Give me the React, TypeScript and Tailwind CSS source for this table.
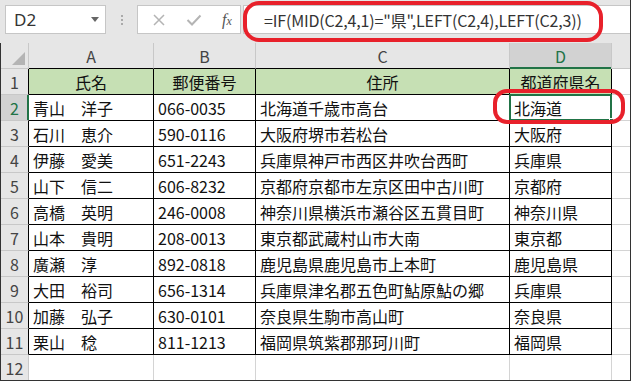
import React from 'react'

const rows: string[][] = [
  ['青山　洋子', '066-0035', '北海道千歳市高台', '北海道'],
  ['石川　恵介', '590-0116', '大阪府堺市若松台', '大阪府'],
  ['伊藤　愛美', '651-2243', '兵庫県神戸市西区井吹台西町', '兵庫県'],
  ['山下　信二', '606-8232', '京都府京都市左京区田中古川町', '京都府'],
  ['高橋　英明', '246-0008', '神奈川県横浜市瀬谷区五貫目町', '神奈川県'],
  ['山本　貴明', '208-0013', '東京都武蔵村山市大南', '東京都'],
  ['廣瀬　淳', '892-0818', '鹿児島県鹿児島市上本町', '鹿児島県'],
  ['大田　裕司', '656-1314', '兵庫県津名郡五色町鮎原鮎の郷', '兵庫県'],
  ['加藤　弘子', '630-0101', '奈良県生駒市高山町', '奈良県'],
  ['栗山　稔', '811-1213', '福岡県筑紫郡那珂川町', '福岡県'],
]

const cellFont = "font-['Noto_Sans_CJK_JP',sans-serif]"

function RowHead({ n, active }: { n: number; active?: boolean }) {
  return (
    <div
      className={`relative flex h-[26px] items-center justify-center border-b border-[#c8c8c8] text-[16px] ${cellFont} ${
        active ? 'bg-[#d2d2d2] text-[#217346]' : 'bg-[#e6e6e6] text-[#444]'
      } ${n <= 11 ? 'border-r border-r-black' : 'border-r border-r-[#c8c8c8]'}`}
    >
      {n}
      {active && <div className="absolute right-[-1px] top-0 h-full w-[2px] bg-[#217346]" />}
    </div>
  )
}

function Cell({ text, center, head }: { text: string; center?: boolean; head?: boolean }) {
  return (
    <div
      className={`flex h-[26px] items-center overflow-visible whitespace-nowrap border-b border-r border-black text-[16px] text-[#111] ${cellFont} ${
        center ? 'justify-center' : 'pl-[4px]'
      } ${head ? 'bg-[#c6e0b4]' : 'bg-white'}`}
    >
      {text}
    </div>
  )
}

function GrayCell() {
  return <div className="h-[26px] border-b border-r border-[#d4d4d4] bg-white" />
}

export default function App() {
  return (
    <div className="relative h-[381px] w-[631px] overflow-hidden border-r border-b border-[#333] bg-[#e6e6e6]">
      {/* formula bar */}
      <div className="flex h-[43px] items-start gap-0 pt-[5px] pl-[5px]">
        <div className="relative flex h-[29px] w-[101px] items-center border border-[#c6c6c6] bg-white pl-[8px] font-['Noto_Sans',sans-serif] text-[17px] text-[#333]">
          D2
          <div className="absolute right-[6px] top-[11px] h-0 w-0 border-x-[4px] border-t-[5px] border-x-transparent border-t-[#666]" />
        </div>
        <div className="flex h-[29px] w-[31px] flex-col items-center justify-center gap-[2px]">
          <div className="h-[2px] w-[2px] bg-[#aaa]" />
          <div className="h-[2px] w-[2px] bg-[#aaa]" />
          <div className="h-[2px] w-[2px] bg-[#aaa]" />
        </div>
        <div className="flex h-[29px] w-[104px] items-center border border-[#c6c6c6] bg-white">
          <svg width="14" height="14" viewBox="0 0 14 14" className="ml-[14px]">
            <path d="M2 2 L12 12 M12 2 L2 12" stroke="#b4b4b4" strokeWidth="1.5" fill="none" />
          </svg>
          <svg width="16" height="14" viewBox="0 0 16 14" className="ml-[20px]">
            <path d="M1.5 7 L6 11.5 L14.5 2.5" stroke="#b4b4b4" strokeWidth="2" fill="none" />
          </svg>
          <span className="ml-[20px] font-['Liberation_Serif',serif] text-[16px] italic text-[#555]">
            f<span className="text-[12px]">x</span>
          </span>
        </div>
        <div className="ml-[2px] flex h-[29px] flex-1 items-center border border-r-0 border-[#c6c6c6] bg-white pl-[20px] font-['Noto_Sans_CJK_JP',sans-serif] text-[16px] tracking-[-0.17px] text-[#333]">
          =IF(MID(C2,4,1)="県",LEFT(C2,4),LEFT(C2,3))
        </div>
      </div>

      {/* grid */}
      <div className="grid grid-cols-[28px_125px_102px_254px_102px_20px] border-l border-[#333]">
        {/* column headers */}
        <div className="relative h-[26px] border-b border-r border-[#c8c8c8] bg-[#e6e6e6]">
          <div className="absolute bottom-[3px] right-[3px] h-0 w-0 border-b-[13px] border-l-[13px] border-b-[#b4b4b4] border-l-transparent" />
        </div>
        {['A', 'B', 'C'].map((c) => (
          <div
            key={c}
            className={`flex h-[26px] items-center justify-center border-b border-r border-b-black border-r-[#c8c8c8] bg-[#e6e6e6] text-[16px] text-[#444] ${cellFont}`}
          >
            {c}
          </div>
        ))}
        <div className={`relative flex h-[26px] items-center justify-center border-r border-[#c8c8c8] bg-[#d2d2d2] text-[16px] text-[#217346] ${cellFont}`}>
          D
          <div className="absolute bottom-0 left-0 h-[2px] w-full bg-[#217346]" />
        </div>
        <div className="h-[26px] border-b border-[#c8c8c8] bg-[#e6e6e6]" />

        {/* row 1 */}
        <RowHead n={1} />
        <Cell text="氏名" center head />
        <Cell text="郵便番号" center head />
        <Cell text="住所" center head />
        <Cell text="都道府県名" center head />
        <GrayCell />

        {rows.map((r, i) => (
          <React.Fragment key={i}>
            <RowHead n={i + 2} active={i === 0} />
            <Cell text={r[0]} />
            <Cell text={r[1]} />
            <Cell text={r[2]} />
            {i === 0 ? (
              <div className={`relative flex h-[26px] items-center border-b border-r border-black bg-white pl-[4px] text-[16px] text-[#111] ${cellFont}`}>
                {r[3]}
                <div className="absolute left-[-1px] top-[-1px] h-[27px] w-[103px] border-2 border-[#217346]" />
                <div className="absolute bottom-[-3px] right-[-3px] h-[5px] w-[5px] border border-white bg-[#217346]" />
              </div>
            ) : (
              <Cell text={r[3]} />
            )}
            <GrayCell />
          </React.Fragment>
        ))}

        {/* row 12 */}
        <RowHead n={12} />
        <GrayCell />
        <GrayCell />
        <GrayCell />
        <GrayCell />
        <GrayCell />
      </div>

      {/* red annotation marks */}
      <div className="pointer-events-none absolute left-[243px] top-[1px] h-[41px] w-[360px] rounded-[16px] border-[4px] border-[#e8212b]" />
      <div className="pointer-events-none absolute left-[493px] top-[89px] h-[35px] w-[132px] rounded-[14px] border-[4px] border-[#e8212b]" />
    </div>
  )
}
